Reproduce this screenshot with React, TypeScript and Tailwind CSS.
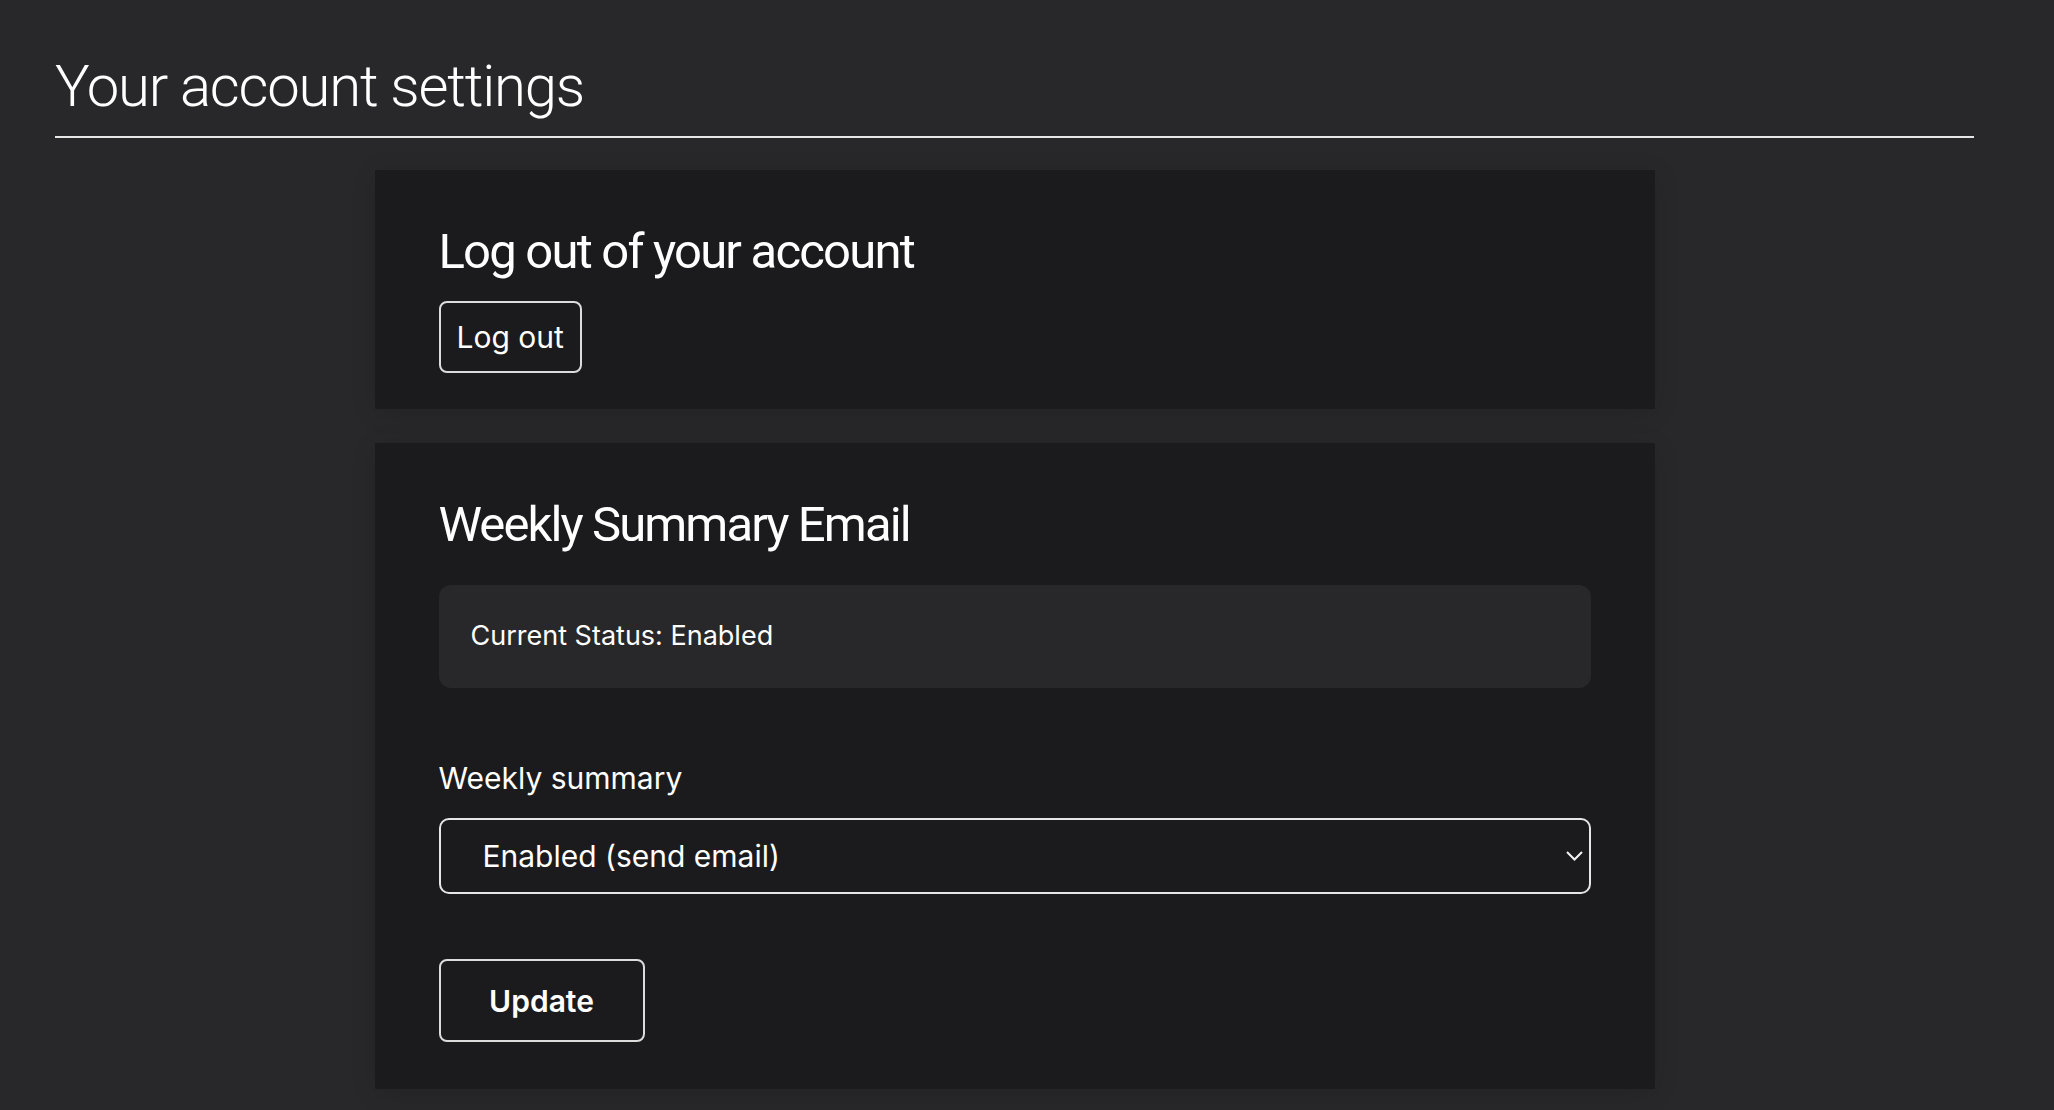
import React, { useState } from 'react';

const Chevron: React.FC = () => (
  <svg width="17" height="11" viewBox="0 0 17 11" fill="none" className="pointer-events-none absolute right-[8px] top-1/2 -translate-y-1/2">
    <path d="M1 1.5 L8.5 9 L16 1.5" stroke="#f2f2f2" strokeWidth="2" />
  </svg>
);

const App: React.FC = () => {
  const [summary, setSummary] = useState<string>('enabled');

  return (
    <div className="min-h-screen bg-[#28282a] pl-[55px] pr-[80px] pt-[57px] pb-[40px] font-['Inter','Liberation_Sans',sans-serif] text-white">
      <h1 className="text-[58px] font-['Roboto','Liberation_Sans',sans-serif] font-light leading-none tracking-[-1.2px] pb-[21px] border-b-2 border-[#e6e6e6]">
        Your account settings
      </h1>

      <div className="mx-auto mt-[32px] flex w-[1280px] flex-col gap-[34px]">
        {/* Log out card */}
        <section className="bg-[#1b1b1d] px-[64px] pt-[57px] pb-[36px] shadow-[0_4px_24px_rgba(0,0,0,0.12)]">
          <h2 className="text-[49px] font-['Roboto','Liberation_Sans',sans-serif] leading-none font-normal tracking-[-1.8px]">Log out of your account</h2>
          <button className="mt-[25px] flex h-[72px] items-center rounded-[8px] border-2 border-[#dcdcdc] px-[16px] text-[30px] leading-none">
            Log out
          </button>
        </section>

        {/* Weekly summary card */}
        <section className="bg-[#1b1b1d] px-[64px] pt-[57px] pb-[47px] shadow-[0_4px_24px_rgba(0,0,0,0.12)]">
          <h2 className="text-[49px] font-['Roboto','Liberation_Sans',sans-serif] leading-none font-normal tracking-[-1.9px]">Weekly Summary Email</h2>

          <div className="mt-[36px] flex h-[103px] items-center rounded-[12px] bg-[#28282a] px-[32px] text-[27px]">
            Current Status: Enabled
          </div>

          <label htmlFor="weekly" className="mt-[75px] block text-[30px] leading-none">
            Weekly summary
          </label>
          <div className="relative mt-[25px]">
            <select
              id="weekly"
              value={summary}
              onChange={(e) => setSummary(e.target.value)}
              className="h-[76px] w-full appearance-none rounded-[10px] border-2 border-[#e6e6e6] bg-[#1b1b1d] pl-[42px] text-[30px] text-white outline-none"
            >
              <option value="enabled">Enabled (send email)</option>
              <option value="disabled">Disabled (don't send email)</option>
            </select>
            <Chevron />
          </div>

          <button className="mt-[65px] flex h-[83px] w-[206px] items-center justify-center rounded-[8px] border-2 border-[#dcdcdc] text-[30px] font-semibold leading-none">
            Update
          </button>
        </section>
      </div>
    </div>
  );
};

export default App;
